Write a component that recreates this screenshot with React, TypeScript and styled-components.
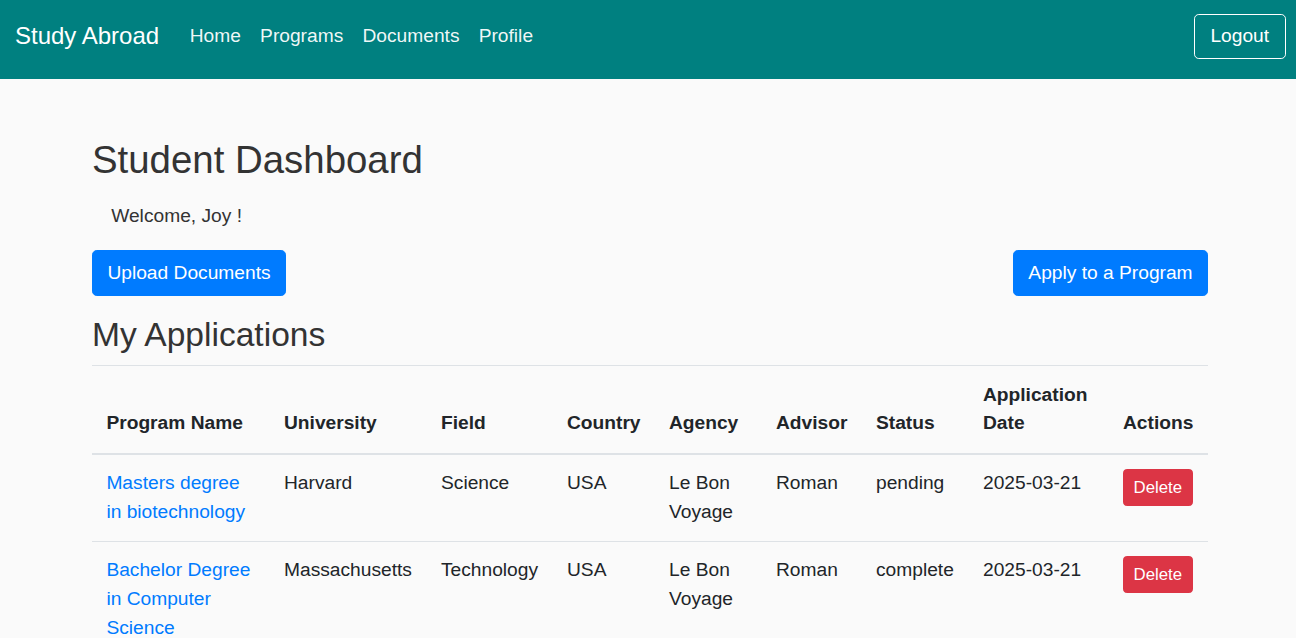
import React from "react";
import styled, { createGlobalStyle } from "styled-components";

const GlobalStyle = createGlobalStyle`
  html { font-size: 19.2px; scrollbar-width: none; }
  html::-webkit-scrollbar, body::-webkit-scrollbar { display: none; }
  body {
    margin: 0;
    background: #fafafa;
    color: #333;
    font-family: "Liberation Sans", Arial, Helvetica, sans-serif;
    font-size: 19.2px;
    line-height: 1.5;
  }
  * { box-sizing: border-box; }
`;

const NavBar = styled.nav`
  display: flex;
  align-items: center;
  justify-content: space-between;
  height: 79px;
  padding: 14px 10.5px 20px 15px;
  background: #008080;
`;

const NavLeft = styled.div`
  display: flex;
  align-items: center;
`;

const Brand = styled.a`
  font-size: 24px;
  line-height: 36px;
  color: #fff;
  text-decoration: none;
  margin-right: 21px;
`;

const NavLink = styled.a`
  font-size: 19.2px;
  line-height: 28.8px;
  color: rgba(255, 255, 255, 0.95);
  text-decoration: none;
  padding: 8px 9.6px;
`;

const OutlineButton = styled.button`
  font-family: inherit;
  font-size: 19.2px;
  line-height: 28.8px;
  color: #fff;
  background: transparent;
  border: 1px solid #fff;
  border-radius: 4.8px;
  padding: 7.2px 15.4px;
  cursor: pointer;
`;

const Main = styled.main`
  padding: 57.6px 88px 0 92px;
`;

const Title = styled.h2`
  font-size: 38.4px;
  font-weight: 500;
  line-height: 1.2;
  margin: 0 0 9.6px;
  color: #333;
`;

const Welcome = styled.p`
  margin: 19.8px 0 19.2px;
  padding-left: 19.2px;
`;

const ActionsRow = styled.div`
  display: flex;
  justify-content: space-between;
  margin-bottom: 19.6px;
`;

const Button = styled.button<{ $variant?: "primary" | "danger"; $small?: boolean }>`
  font-family: inherit;
  font-size: ${(p) => (p.$small ? "16.8px" : "19.2px")};
  line-height: 1.5;
  color: #fff;
  background: ${(p) => (p.$variant === "danger" ? "#dc3545" : "#007bff")};
  border: 1px solid ${(p) => (p.$variant === "danger" ? "#dc3545" : "#007bff")};
  border-radius: ${(p) => (p.$small ? "3.84px" : "4.8px")};
  padding: ${(p) => (p.$small ? "4.8px 9.6px" : "7.2px 14.4px")};
  cursor: pointer;
`;

const SubTitle = styled.h3`
  font-size: 33.6px;
  font-weight: 500;
  line-height: 1.2;
  margin: 0 0 9.6px;
  color: #333;
`;

const Table = styled.table`
  width: 100%;
  table-layout: fixed;
  border-collapse: collapse;
  color: #212529;
`;

const Th = styled.th`
  text-align: left;
  vertical-align: bottom;
  font-weight: 700;
  padding: 14.4px;
  border-top: 1px solid #dee2e6;
  border-bottom: 2px solid #dee2e6;
`;

const Td = styled.td`
  vertical-align: top;
  padding: 14.4px;
  border-top: 1px solid #dee2e6;
`;

const ProgramLink = styled.a`
  color: #007bff;
  text-decoration: none;
`;

const columns = [
  { label: "Program Name", width: 177.6 },
  { label: "University", width: 157 },
  { label: "Field", width: 126 },
  { label: "Country", width: 102 },
  { label: "Agency", width: 107 },
  { label: "Advisor", width: 100 },
  { label: "Status", width: 107 },
  { label: "Application Date", width: 140 },
  { label: "Actions", width: 99.4 },
];

const rows = [
  {
    program: "Masters degree in biotechnology",
    university: "Harvard",
    field: "Science",
    country: "USA",
    agency: "Le Bon Voyage",
    advisor: "Roman",
    status: "pending",
    date: "2025-03-21",
  },
  {
    program: "Bachelor Degree in Computer Science",
    university: "Massachusetts",
    field: "Technology",
    country: "USA",
    agency: "Le Bon Voyage",
    advisor: "Roman",
    status: "complete",
    date: "2025-03-21",
  },
];

export default function App() {
  return (
    <>
      <GlobalStyle />
      <NavBar>
        <NavLeft>
          <Brand href="#">Study Abroad</Brand>
          <NavLink href="#">Home</NavLink>
          <NavLink href="#">Programs</NavLink>
          <NavLink href="#">Documents</NavLink>
          <NavLink href="#">Profile</NavLink>
        </NavLeft>
        <OutlineButton>Logout</OutlineButton>
      </NavBar>
      <Main>
        <Title>Student Dashboard</Title>
        <Welcome>Welcome, Joy !</Welcome>
        <ActionsRow>
          <Button $variant="primary">Upload Documents</Button>
          <Button $variant="primary">Apply to a Program</Button>
        </ActionsRow>
        <SubTitle>My Applications</SubTitle>
        <Table>
          <colgroup>
            {columns.map((c) => (
              <col key={c.label} style={{ width: c.width }} />
            ))}
          </colgroup>
          <thead>
            <tr>
              {columns.map((c) => (
                <Th key={c.label}>{c.label}</Th>
              ))}
            </tr>
          </thead>
          <tbody>
            {rows.map((r) => (
              <tr key={r.program}>
                <Td>
                  <ProgramLink href="#">{r.program}</ProgramLink>
                </Td>
                <Td>{r.university}</Td>
                <Td>{r.field}</Td>
                <Td>{r.country}</Td>
                <Td>{r.agency}</Td>
                <Td>{r.advisor}</Td>
                <Td>{r.status}</Td>
                <Td>{r.date}</Td>
                <Td>
                  <Button $variant="danger" $small>
                    Delete
                  </Button>
                </Td>
              </tr>
            ))}
          </tbody>
        </Table>
      </Main>
    </>
  );
}
